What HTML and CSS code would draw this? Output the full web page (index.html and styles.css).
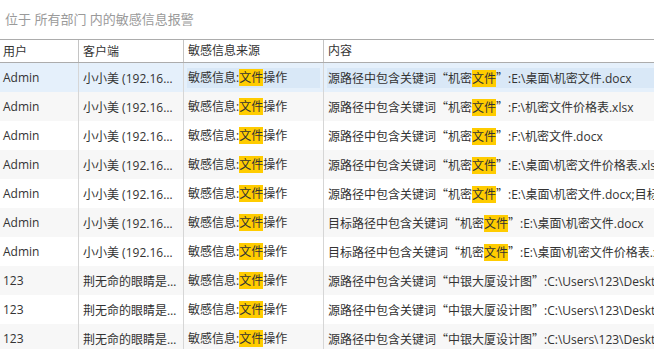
FILE: index.html
```html
<!DOCTYPE html>
<html lang="zh-CN">
<head>
<meta charset="utf-8">
<title>敏感信息报警</title>
<link rel="stylesheet" href="styles.css">
</head>
<body>
<div class="title">位于 所有部门 内的敏感信息报警</div>
<div class="table">
  <div class="row head">
    <div class="c c1">用户</div>
    <div class="c c2">客户端</div>
    <div class="c c3"><div class="box">敏感信息来源</div></div>
    <div class="c c4"><div class="box">内容</div></div>
  </div>

  <div class="row sel">
    <div class="c c1">Admin</div>
    <div class="c c2"><span class="ell">小小美 (192.168.1.10)</span></div>
    <div class="c c3"><div class="box">敏感信息:<mark>文件</mark>操作</div></div>
    <div class="c c4"><div class="box">源路径中包含关键词<span class="ql">“</span>机密<mark>文件</mark><span class="qr">”</span>:E:\桌面\机密文件.docx</div></div>
  </div>
  <div class="row">
    <div class="c c1">Admin</div>
    <div class="c c2"><span class="ell">小小美 (192.168.1.10)</span></div>
    <div class="c c3"><div class="box">敏感信息:<mark>文件</mark>操作</div></div>
    <div class="c c4"><div class="box">源路径中包含关键词<span class="ql">“</span>机密<mark>文件</mark><span class="qr">”</span>:F:\机密文件价格表.xlsx</div></div>
  </div>
  <div class="row">
    <div class="c c1">Admin</div>
    <div class="c c2"><span class="ell">小小美 (192.168.1.10)</span></div>
    <div class="c c3"><div class="box">敏感信息:<mark>文件</mark>操作</div></div>
    <div class="c c4"><div class="box">源路径中包含关键词<span class="ql">“</span>机密<mark>文件</mark><span class="qr">”</span>:F:\机密文件.docx</div></div>
  </div>
  <div class="row">
    <div class="c c1">Admin</div>
    <div class="c c2"><span class="ell">小小美 (192.168.1.10)</span></div>
    <div class="c c3"><div class="box">敏感信息:<mark>文件</mark>操作</div></div>
    <div class="c c4"><div class="box">源路径中包含关键词<span class="ql">“</span>机密<mark>文件</mark><span class="qr">”</span>:E:\桌面\机密文件价格表.xlsx</div></div>
  </div>
  <div class="row">
    <div class="c c1">Admin</div>
    <div class="c c2"><span class="ell">小小美 (192.168.1.10)</span></div>
    <div class="c c3"><div class="box">敏感信息:<mark>文件</mark>操作</div></div>
    <div class="c c4"><div class="box">源路径中包含关键词<span class="ql">“</span>机密<mark>文件</mark><span class="qr">”</span>:E:\桌面\机密文件.docx;目标路径:E:\备份\机密文件.docx</div></div>
  </div>
  <div class="row">
    <div class="c c1">Admin</div>
    <div class="c c2"><span class="ell">小小美 (192.168.1.10)</span></div>
    <div class="c c3"><div class="box">敏感信息:<mark>文件</mark>操作</div></div>
    <div class="c c4"><div class="box">目标路径中包含关键词<span class="ql">“</span>机密<mark>文件</mark><span class="qr">”</span>:E:\桌面\机密文件.docx</div></div>
  </div>
  <div class="row">
    <div class="c c1">Admin</div>
    <div class="c c2"><span class="ell">小小美 (192.168.1.10)</span></div>
    <div class="c c3"><div class="box">敏感信息:<mark>文件</mark>操作</div></div>
    <div class="c c4"><div class="box">目标路径中包含关键词<span class="ql">“</span>机密<mark>文件</mark><span class="qr">”</span>:E:\桌面\机密文件价格表.xlsx</div></div>
  </div>
  <div class="row">
    <div class="c c1">123</div>
    <div class="c c2"><span class="ell">荆无命的眼睛是什么颜色 (192.168.1.20)</span></div>
    <div class="c c3"><div class="box">敏感信息:<mark>文件</mark>操作</div></div>
    <div class="c c4"><div class="box">源路径中包含关键词<span class="ql">“</span>中银大厦设计图<span class="qr">”</span>:C:\Users\123\Desktop\中银大厦设计图.dwg</div></div>
  </div>
  <div class="row">
    <div class="c c1">123</div>
    <div class="c c2"><span class="ell">荆无命的眼睛是什么颜色 (192.168.1.20)</span></div>
    <div class="c c3"><div class="box">敏感信息:<mark>文件</mark>操作</div></div>
    <div class="c c4"><div class="box">源路径中包含关键词<span class="ql">“</span>中银大厦设计图<span class="qr">”</span>:C:\Users\123\Desktop\中银大厦设计图.dwg</div></div>
  </div>
  <div class="row">
    <div class="c c1">123</div>
    <div class="c c2"><span class="ell">荆无命的眼睛是什么颜色 (192.168.1.20)</span></div>
    <div class="c c3"><div class="box">敏感信息:<mark>文件</mark>操作</div></div>
    <div class="c c4"><div class="box">源路径中包含关键词<span class="ql">“</span>中银大厦设计图<span class="qr">”</span>:C:\Users\123\Desktop\中银大厦设计图.dwg</div></div>
  </div>
</div>
</body>
</html>
```

FILE: styles.css
```css
html, body {
  margin: 0;
  padding: 0;
  background: #ffffff;
  overflow: hidden;
}
body {
  font-family: "Open Sans", "Noto Sans CJK SC", sans-serif;
  font-size: 12px;
  color: #333333;
}
.title {
  height: 39px;
  line-height: 39px;
  padding-left: 5px;
  font-size: 13px;
  color: #9a9a9a;
  box-sizing: border-box;
}
.table {
  width: 1000px;
}
.row {
  display: grid;
  grid-template-columns: 78px 105px 140px 1fr;
  height: 29px;
  background: #ffffff;
}
.row:nth-child(odd) {
  background: #f7f7f7;
}
.row.head {
  height: 24px;
  background: #ffffff;
  border-top: 1px solid #acacac;
  border-bottom: 1px solid #acacac;
  box-sizing: border-box;
}
.row.sel {
  background: #e5f0fb;
}
.c {
  display: flex;
  align-items: center;
  min-width: 0;
  overflow: hidden;
  white-space: nowrap;
  border-left: 1px solid #d6d6d6;
  padding: 0 3px;
}
.head .c {
  border-left-color: #c4c4c4;
}
.c.c1 {
  border-left: none;
  padding-left: 3px;
}
.c.c2 {
  padding-left: 4px;
  padding-right: 5px;
}
.ell {
  display: block;
  overflow: hidden;
  text-overflow: ellipsis;
  white-space: nowrap;
}
.box {
  height: 20px;
  line-height: 20px;
  padding: 0 1px;
  flex: 1;
  white-space: nowrap;
}
.sel .box {
  background: #d9e8f7;
}
mark {
  background: #ffcc00;
  color: #333333;
}
.ql, .qr {
  display: inline-block;
  width: 12px;
  font-family: "Noto Sans CJK SC", sans-serif;
}
.ql {
  text-align: right;
}
.qr {
  text-align: left;
}
```
